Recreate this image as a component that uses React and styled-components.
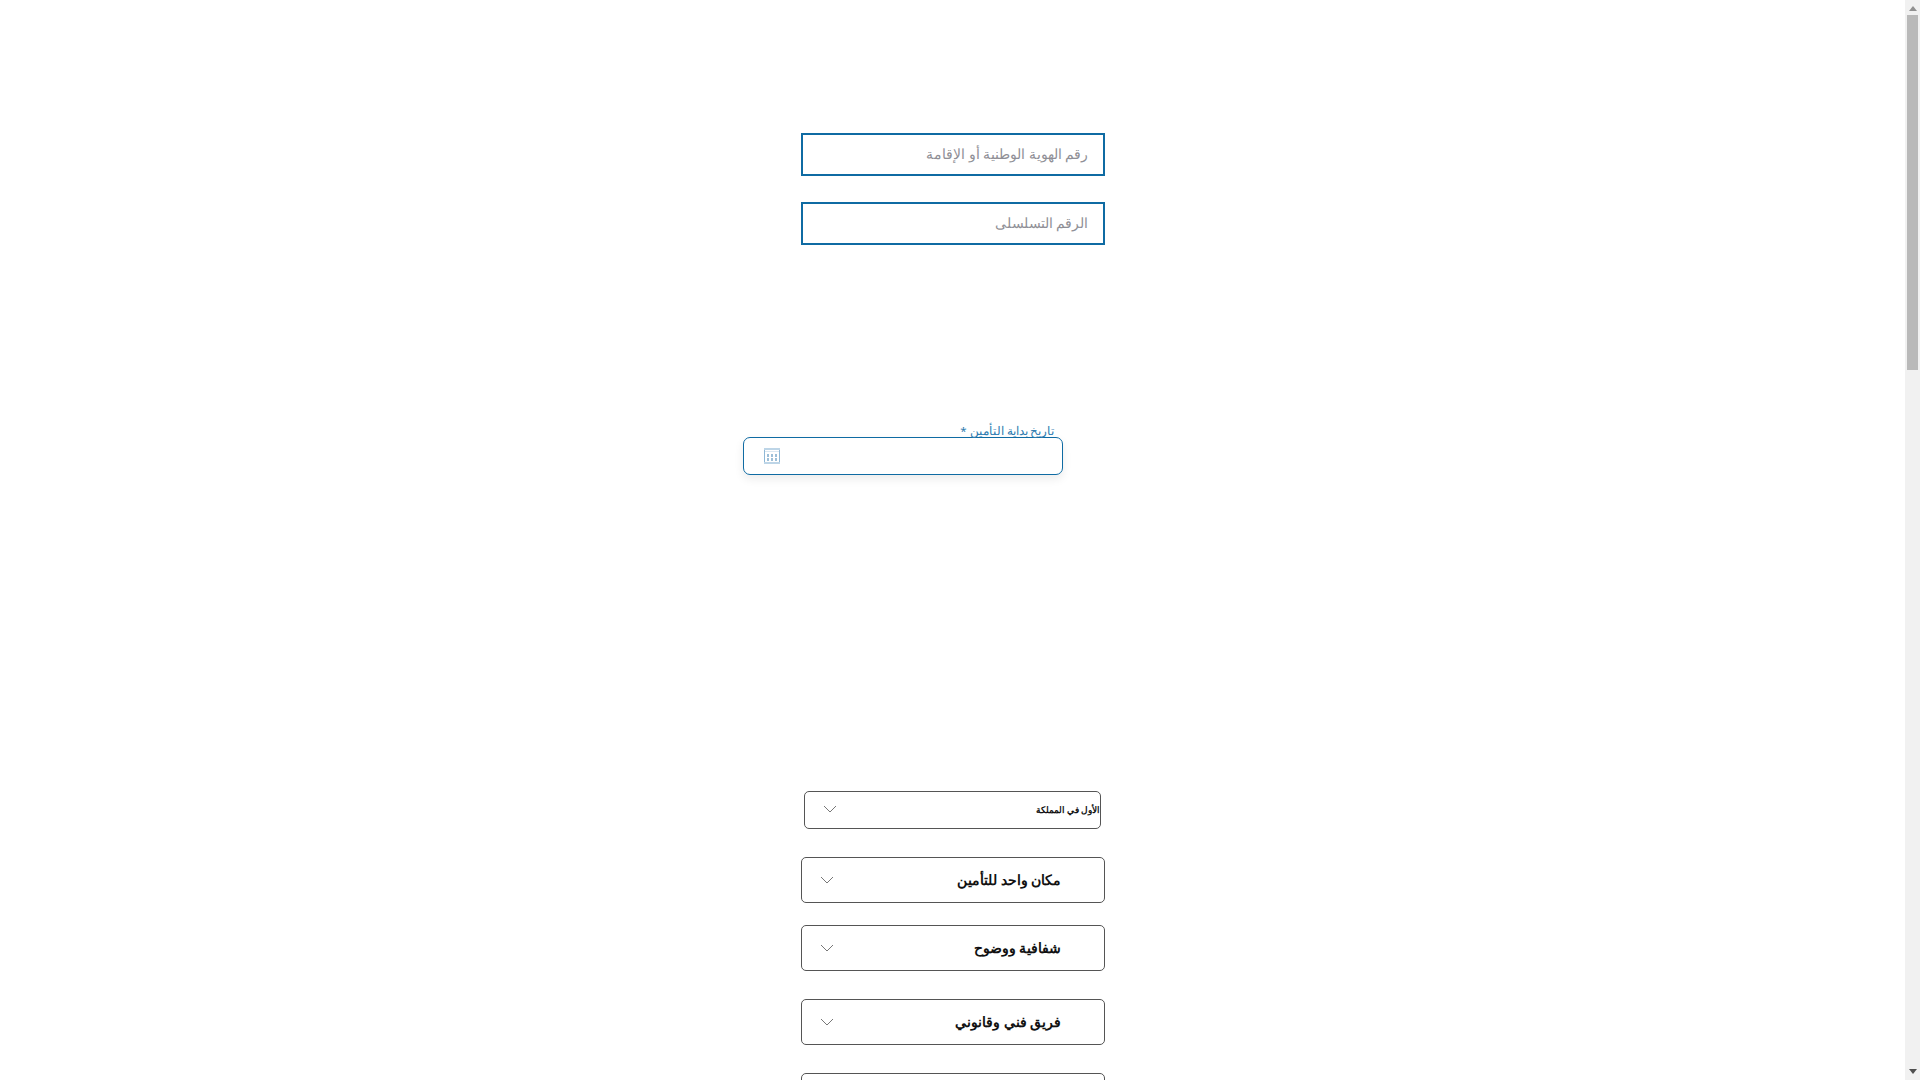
import styled, { createGlobalStyle } from "styled-components";

const GlobalStyle = createGlobalStyle`
  html, body {
    margin: 0;
    padding: 0;
    background: #fff;
  }
  body {
    font-family: "Noto Sans", "Liberation Sans", sans-serif;
  }
`;

const Shell = styled.div`
  display: flex;
  height: 100vh;
  overflow: hidden;
`;

const Page = styled.main`
  flex: 1;
  direction: rtl;
  padding-top: 133px;
  box-sizing: border-box;
  display: flex;
  flex-direction: column;
  align-items: center;
`;

const Column = styled.div`
  width: 304px;
`;

const TextInput = styled.input`
  display: block;
  box-sizing: border-box;
  width: 100%;
  height: 43px;
  margin-bottom: 26px;
  padding: 0 14px 2px;
  border: 2.5px solid #0f6ba3;
  border-radius: 0;
  outline: none;
  background: #fff;
  font-family: inherit;
  font-size: 14px;
  color: #333;
  &::placeholder {
    color: #8f8f96;
    opacity: 1;
  }
`;

const DateField = styled.div`
  margin-top: 180px;
  margin-right: 42px;
  width: 320px;
`;

const DateLabel = styled.label`
  display: block;
  height: 12px;
  line-height: 12px;
  margin-right: 8px;
  font-size: 11.5px;
  color: #2e7cb0;
  white-space: nowrap;
`;

const DateBox = styled.div`
  box-sizing: border-box;
  height: 38px;
  padding: 0 20px;
  display: flex;
  align-items: center;
  justify-content: flex-end;
  border: 1px solid #0f6ba3;
  border-radius: 7px;
  background: #fff;
  box-shadow: 0 4px 10px rgb(0 0 0 / 0.08);
`;

const Accordions = styled.div`
  margin-top: 316px;
`;

const Row = styled.button`
  display: flex;
  align-items: center;
  justify-content: space-between;
  box-sizing: border-box;
  width: ${(p) => (p.$small ? "297px" : "304px")};
  height: ${(p) => (p.$small ? "38px" : "46px")};
  margin: 0 auto ${(p) => p.$gap}px;
  padding: ${(p) => (p.$small ? "0 0 2px 18px" : "0 42px 0 18px")};
  border: 1px solid #555;
  border-radius: 5px;
  background: #fff;
  font-family: inherit;
  font-weight: 700;
  font-size: ${(p) => (p.$small ? "8.5px" : "13.5px")};
  color: #111;
`;

const ScrollBar = styled.div`
  flex: none;
  width: 15px;
  display: flex;
  flex-direction: column;
  background: #f1f1f1;
`;

const ScrollButton = styled.div`
  height: 15px;
  display: flex;
  align-items: ${(p) => (p.$up ? "flex-start" : "flex-end")};
  justify-content: center;
  padding: ${(p) => (p.$up ? "6px 0 0" : "0 0 6px")};
  box-sizing: border-box;
`;

const Track = styled.div`
  flex: 1;
  padding: 0 2px;
`;

const Thumb = styled.div`
  height: 355px;
  background: #b9b9b9;
`;

const Chevron = () => (
  <svg width="14" height="8" viewBox="0 0 14 8" fill="none" stroke="#777" strokeWidth="1">
    <path d="M1 1l6 6 6-6" />
  </svg>
);

const CalendarIcon = () => (
  <svg width="16" height="16" viewBox="0 0 16 16">
    <rect x="0" y="0" width="16" height="2" fill="#bdd5e7" />
    <rect x="0" y="14" width="16" height="2" fill="#bdd5e7" />
    <rect x="0" y="2" width="1" height="12" fill="#8fb8d6" />
    <rect x="15" y="2" width="1" height="12" fill="#8fb8d6" />
    <rect x="1" y="3" width="14" height="1" fill="#dbe8f2" />
    <g fill="#9dbfd8">
      <rect x="3" y="6" width="2" height="3" />
      <rect x="7" y="6" width="2" height="3" />
      <rect x="11" y="6" width="2" height="3" />
      <rect x="3" y="10" width="2" height="3" />
      <rect x="7" y="10" width="2" height="3" />
      <rect x="11" y="10" width="2" height="3" />
    </g>
  </svg>
);

const rows = [
  { text: "الأول في المملكة", small: true, gap: 28 },
  { text: "مكان واحد للتأمين", gap: 22 },
  { text: "شفافية ووضوح", gap: 28 },
  { text: "فريق فني وقانوني", gap: 28 },
  { text: "", gap: 0 },
];

export default function App() {
  return (
    <>
      <GlobalStyle />
      <Shell>
        <Page>
          <Column>
            <TextInput placeholder="رقم الهوية الوطنية أو الإقامة" />
            <TextInput placeholder="الرقم التسلسلى" />
            <DateField>
              <DateLabel>تاريخ بداية التأمين *</DateLabel>
              <DateBox>
                <CalendarIcon />
              </DateBox>
            </DateField>
            <Accordions>
              {rows.map((r, i) => (
                <Row key={i} $small={r.small} $gap={r.gap}>
                  <span>{r.text}</span>
                  <Chevron />
                </Row>
              ))}
            </Accordions>
          </Column>
        </Page>
        <ScrollBar>
          <ScrollButton $up>
            <svg width="8" height="5" viewBox="0 0 8 5">
              <path d="M4 0l4 5H0z" fill="#909090" />
            </svg>
          </ScrollButton>
          <Track>
            <Thumb />
          </Track>
          <ScrollButton>
            <svg width="8" height="5" viewBox="0 0 8 5">
              <path d="M0 0h8L4 5z" fill="#505050" />
            </svg>
          </ScrollButton>
        </ScrollBar>
      </Shell>
    </>
  );
}
